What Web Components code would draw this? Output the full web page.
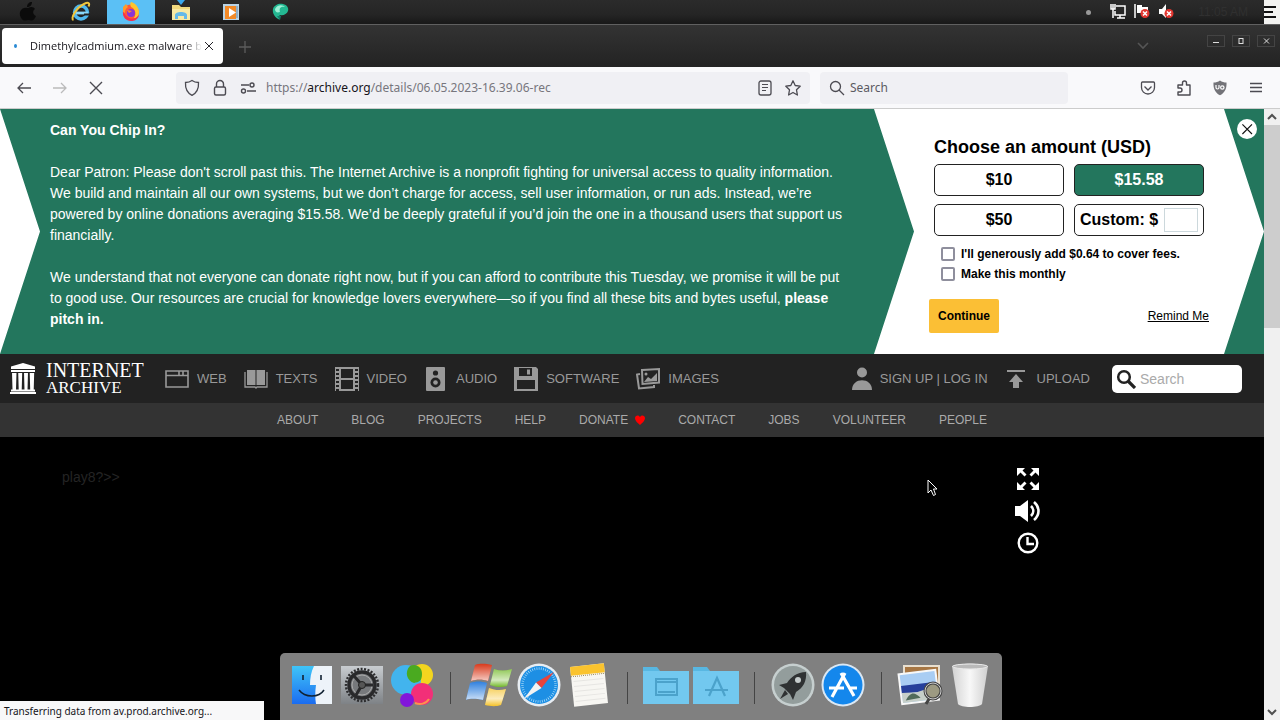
<!DOCTYPE html>
<html lang="en">
<head>
<meta charset="utf-8">
<title>Dimethylcadmium.exe malware</title>
<style>
html,body{height:100%}
body{margin:0;background:#000;font-family:"Liberation Sans",Arial,sans-serif}
</style>
</head>
<body>
<desk-top></desk-top>
<script>
const UI_FONT = '"Noto Sans","Open Sans",sans-serif';

/* every icon: [viewBox width, viewBox height, markup] */
const ICONS = {
  apple:[24,24,'<g fill="#0b0b0b" transform="translate(-3 0)"><path d="M12 8c3-2 6-1 7 1-3 2-2 6 1 7-1 3-3 5-5 4.500-2-.8-3-.8-5 0C6 21.500 3 16 4 12c1-4 5-5 8-4z"/><path d="M11 7c0-3 2-5 5-5 0 3-2 5-5 5z"/></g>'],
  ie:[24,24,'<circle cx="12" cy="12.500" r="6.500" fill="none" stroke="#4fb8ee" stroke-width="3.500"/><path d="M7 13h12" stroke="#8ad8fa" stroke-width="2.800"/><path d="M15 14.500h6" stroke="#222" stroke-width="2"/><path d="M4.500 20C1 19 7 8 15 4c5-2.500 6-.5 4.500 2.500" fill="none" stroke="#f0c53c" stroke-width="2"/>'],
  firefox:[24,24,'<circle cx="12" cy="12.500" r="8" fill="#ff5a36"/><path d="M4 10c2 8 10 12 16 5-1 5-5 6-8 6-5 0-9-4-8-11z" fill="#f5304f"/><path d="M12 2c4 1 8 5 8 10 0 4-3 6-5 6 3-5 1-9-3-11-1-2-1-4 0-5z" fill="#ffc52e"/><path d="M4 7l3-3 2 3c-3 2-3 4-3 6L4 12z" fill="#ff9a2b"/><circle cx="12" cy="13" r="4" fill="#8b35d6"/><path d="M8 10l5 1-3 2z" fill="#ff8a2f"/>'],
  folder:[24,24,'<path d="M3 5h7l2 2h9v13H3z" fill="#f0d97e"/><path d="M3 9h18v11H3z" fill="#f7e9a4"/><path d="M6 15c0-4 12-4 12 0v4h-3v-3H9v3H6z" fill="#64b9e8"/><path d="M8 0h8l-4 5z" fill="#38a8ee"/>'],
  media:[24,24,'<path d="M4 4h16v16H4z" fill="#b8d3e6"/><path d="M6 6h11v13H6z" fill="#f28a28"/><path d="M10 8v9l7-4.500z" fill="#fff"/><path d="M18 6v12" stroke="#6488a5" stroke-width="1"/>'],
  orb:[24,24,'<path d="M4 9c1-4 6-6 10-5s6 4 5 7-5 5-8 4c-2 2-1 4 0 5-5-2-8-7-7-11z" fill="#24b892"/><path d="M6 9c3-5 8-4 10-2-5-1-6 2-5 5-3 1-5 0-5-3z" fill="#9cf0d6"/><path d="M8 16l3 4 1-4z" fill="#137d6b"/>'],
  net:[24,24,'<path d="M10 6h9v9H9v-4" fill="none" stroke="#fff" stroke-width="1.500"/><path d="M5 4v5h4V4M7 4v5M7 9v9M11 18h8M14 15v3" fill="none" stroke="#fff" stroke-width="1.500"/>'],
  flagx:[24,24,'<path d="M5 4v14" stroke="#fff" stroke-width="1.500"/><path d="M7 5h5v2h6v6H7z" fill="#fff"/><circle cx="15" cy="13.500" r="4.500" fill="#e2352f"/><path d="M13 11.500l4 4m0-4l-4 4" stroke="#fff" stroke-width="1.500"/>'],
  mutex:[24,24,'<path d="M5 9h3l4-5v14l-4-4H5z" fill="#fff"/><circle cx="15" cy="13.500" r="4.500" fill="#e2352f"/><path d="M13 11.500l4 4m0-4l-4 4" stroke="#fff" stroke-width="1.500"/>'],
  lines:[16,24,'<path d="M0 0h16v24H0z" fill="#f2f2f0"/><path d="M0 7h12M0 12h9M0 17h12" stroke="#111" stroke-width="2"/>'],
  back:[18,18,'<path d="M16 9H3M8 4L3 9l5 5" fill="none" stroke="currentColor" stroke-width="1.300"/>'],
  fwd:[18,18,'<path d="M2 9h13M10 4l5 5-5 5" fill="none" stroke="currentColor" stroke-width="1.300"/>'],
  x:[18,18,'<path d="M3 3l12 12M15 3L3 15" fill="none" stroke="currentColor" stroke-width="1.400"/>'],
  shield:[18,18,'<path d="M9 1.500c2 1.500 4 2 6.500 2 .3 5-1 10-6.500 12.800C3.500 13.500 2.200 8.500 2.500 3.500 5 3.500 7 3 9 1.500z" fill="none" stroke="currentColor" stroke-width="1.300"/>'],
  lock:[18,18,'<rect x="3.500" y="8" width="11" height="8" rx="1.500" fill="none" stroke="currentColor" stroke-width="1.400"/><path d="M5.500 8V5a3.500 3.500 0 0 1 7 0v3" fill="none" stroke="currentColor" stroke-width="1.400"/>'],
  perms:[18,18,'<g fill="none" stroke="currentColor" stroke-width="1.400"><path d="M2 6h8M8 12h9"/><circle cx="13" cy="6" r="2"/><circle cx="4.500" cy="12" r="2"/></g>'],
  reader:[18,18,'<rect x="3" y="2" width="12" height="14" rx="2" fill="none" stroke="currentColor" stroke-width="1.300"/><path d="M6 5.500h6M6 8.500h6M6 11.500h4" stroke="currentColor" stroke-width="1.200"/>'],
  star:[18,18,'<path d="M9 1.800l2.200 4.700 5 .7-3.700 3.600.9 5.200L9 13.500 4.600 16l.9-5.200L1.800 7.200l5-.7z" fill="none" stroke="currentColor" stroke-width="1.300" stroke-linejoin="round"/>'],
  search:[18,18,'<circle cx="7.500" cy="7.500" r="5" fill="none" stroke="currentColor" stroke-width="1.300"/><path d="M11 11l5 5" stroke="currentColor" stroke-width="1.300"/>'],
  pocket:[18,18,'<path d="M3.500 3h11a1 1 0 0 1 1 1v4.500a6.500 6.500 0 0 1-13 0V4a1 1 0 0 1 1-1z" fill="none" stroke="currentColor" stroke-width="1.300"/><path d="M5.500 7.500L9 11l3.500-3.500" fill="none" stroke="currentColor" stroke-width="1.300"/>'],
  puzzle:[18,18,'<path d="M3 6h4.500V4a2 2 0 0 1 4 0v2H15v10H3v-3h2a2 2 0 0 0 0-4H3z" fill="none" stroke="currentColor" stroke-width="1.400" stroke-linejoin="round"/>'],
  ublock:[18,18,'<path d="M9 1.500c2 1.500 4 2 6.500 2 .3 5-1 10-6.500 12.800C3.500 13.500 2.200 8.500 2.500 3.500 5 3.500 7 3 9 1.500z" fill="#737378"/><path d="M5 6v2.500a1.500 1.500 0 0 0 3 0V6" fill="none" stroke="#fff" stroke-width="1.200"/><circle cx="11.300" cy="8.500" r="1.700" fill="none" stroke="#fff" stroke-width="1.200"/>'],
  menu:[18,18,'<path d="M3 4.500h12M3 8.500h12M3 12.500h12" stroke="currentColor" stroke-width="1.300"/>'],
  plus:[18,18,'<path d="M9 3v12M3 9h12" stroke="currentColor" stroke-width="1.300"/>'],
  chev:[18,18,'<path d="M4 7l5 5 5-5" fill="none" stroke="currentColor" stroke-width="1.600"/>'],
  up:[16,16,'<path d="M4 10l4-4 4 4" fill="none" stroke="currentColor" stroke-width="2"/>'],
  down:[16,16,'<path d="M4 6l4 4 4-4" fill="none" stroke="currentColor" stroke-width="2"/>'],
  min:[18,12,'<rect x=".5" y=".5" width="17" height="11" fill="none" stroke="#444"/><path d="M6 7.500h6" stroke="#ddd"/>'],
  max:[18,12,'<rect x=".5" y=".5" width="17" height="11" fill="none" stroke="#444"/><rect x="7" y="3.500" width="4" height="5" fill="none" stroke="#ddd"/>'],
  close:[18,12,'<rect x=".5" y=".5" width="17" height="11" fill="none" stroke="#444"/><path d="M7 3.500l5 5m0-5l-5 5" stroke="#ddd"/>'],
  temple:[28,32,'<g fill="#fff"><path d="M14 0l12 3.500V6H2V3.500z"/><path d="M2 7h24v2H2zM1 29h26v2H1zM2 26.500h24v2H2z"/><path d="M3 9h4.500L7 27H3.500zM9.200 9h4l-.5 18h-3zM15 9h4l-.5 18h-3zM20.700 9h4.500l-.5 18h-3.500z"/></g><path d="M2 9.500h24" stroke="#222"/>'],
  web:[24,24,'<path d="M1 4h22v16H1zM1 8.500h22M14 4v4M18 4v4" fill="none" stroke="currentColor" stroke-width="1.600"/>'],
  texts:[24,24,'<path d="M3 3h8.500v15H3zM12.500 3H21v15h-8.500z" fill="currentColor"/><path d="M1 5v15h10l1 1 1-1h10V5" fill="none" stroke="currentColor" stroke-width="1.300"/>'],
  video:[24,24,'<path d="M5 1h14v22H5zM5 12h14" fill="none" stroke="currentColor" stroke-width="2"/><path d="M2 0v24M22 0v24" stroke="currentColor" stroke-width="4" stroke-dasharray="2 2"/><path d="M.5 0v24M23.500 0v24" stroke="currentColor"/>'],
  audio:[24,24,'<rect x="2" y="0" width="19" height="24" rx="1" fill="currentColor"/><circle cx="11.500" cy="6" r="2.600" fill="#222"/><circle cx="11.500" cy="15.500" r="5" fill="#222"/><circle cx="11.500" cy="15.500" r="2.300" fill="currentColor"/>'],
  software:[24,24,'<path d="M0 0h22l2 2v22H0z" fill="currentColor"/><path d="M5 1h13v8H5zM3 13h18v9H3z" fill="#222"/><path d="M13 2.500h3v5h-3z" fill="currentColor"/>'],
  images:[24,24,'<path d="M6 3l17-1v13.500L6.500 17z" fill="none" stroke="currentColor" stroke-width="2"/><path d="M4 7l-3 .5 2 14 15-1.500v-2" fill="none" stroke="currentColor" stroke-width="2"/><path d="M8 15l4-5 3 2 6-6v8z" fill="currentColor"/><circle cx="10" cy="7" r="1.500" fill="currentColor"/>'],
  user:[20,24,'<circle cx="10" cy="5.500" r="5" fill="currentColor"/><path d="M0 23c0-13 20-13 20 0z" fill="currentColor"/>'],
  upload:[23,20,'<path d="M1 1h18v2H1z" fill="currentColor"/><path d="M10 5l7 8h-4v6H7v-6H3z" fill="currentColor"/>'],
  bsearch:[20,20,'<circle cx="8" cy="8" r="5.800" fill="none" stroke="#222" stroke-width="2.500"/><path d="M12 12l7 7" stroke="#222" stroke-width="3.200"/>'],
  heart:[10,10,'<path d="M5 10C3 8 0 6 0 3c0-3 4-3.500 5-1 1-2.500 5-2 5 1 0 3-3 5-5 7z" fill="#f00"/>'],
  full:[24,24,'<g fill="#fff"><path id="q" d="M1 1h8L6.500 3.500l4 4-2 2-4-4L1 9z"/><path d="M23 1v8l-3.500-3.500-4 4-2-2 4-4L15 1zM1 23v-8l3.500 3.500 4-4 2 2-4 4L9 23zM23 23h-8l2.500-2.500-4-4 2-2 4 4L23 15z"/></g>'],
  vol:[26,24,'<path d="M0 7h5l8-6v22l-8-6H0z" fill="#fff"/><path d="M16 7c3 3 3 7 0 10M19 3c6 5 6 13 0 18" fill="none" stroke="#fff" stroke-width="2.600"/>'],
  clock:[24,24,'<circle cx="12" cy="12" r="9.300" fill="none" stroke="#fff" stroke-width="2.400"/><path d="M11.500 6v7H18" fill="none" stroke="#fff" stroke-width="2.400"/>'],
  cursor:[12,18,'<path d="M1 1v13l3-3 2.500 5.500 2-1L6.500 10H10z" fill="#000" stroke="#fff"/>'],
  finder:[44,44,'<defs><linearGradient id="a" x2="0" y2="1"><stop stop-color="#3fc5f8"/><stop offset="1" stop-color="#1b6cf0"/></linearGradient></defs><path d="M2 3h40v38H2z" fill="#edf3f9"/><path d="M2 3h22c-3 6-4 12-4 19h6c-1 7-1 13 0 19H2z" fill="url(#a)"/><path d="M13 12v5M31 12v5" stroke="#123" stroke-width="1.600"/><path d="M9 27c6 8 20 8 25 0" fill="none" stroke="#123" stroke-width="1.500"/>'],
  gear:[44,44,'<defs><linearGradient id="b" x2="0" y2="1"><stop stop-color="#c8ccd0"/><stop offset="1" stop-color="#7e8286"/></linearGradient></defs><path d="M1 3h42v38H1z" fill="url(#b)"/><circle cx="22" cy="22" r="16" fill="none" stroke="#2d2d2f" stroke-width="2.500" stroke-dasharray="2 1.500"/><circle cx="22" cy="22" r="13" fill="#77797c" stroke="#29292b" stroke-width="3.500"/><circle cx="22" cy="22" r="10" fill="none" stroke="#aaa"/><path d="M22 22L14 13M22 22h11M22 22l-6 10" stroke="#29292b" stroke-width="3"/><circle cx="22" cy="22" r="3.500" fill="#555" stroke="#222"/>'],
  games:[44,44,'<circle cx="32" cy="12" r="11" fill="#f3d51f"/><circle cx="16" cy="17" r="15" fill="#42b4ee"/><path d="M20 3c6-3 12 1 12 8s-3 8-8 9c-7-2-10-11-4-17z" fill="#4aaa20"/><circle cx="32" cy="31" r="11" fill="#f22f78"/><circle cx="17" cy="37" r="7" fill="#8216da"/><path d="M25 40c5 2 11 1 14-4" fill="none" stroke="#ff914d" stroke-width="2"/>'],
  windows:[48,44,'<defs><linearGradient id="w" x2="0" y2="1"><stop stop-color="#fff" stop-opacity="0"/><stop offset=".7" stop-color="#fff" stop-opacity=".7"/><stop offset="1" stop-color="#fff" stop-opacity="0"/></linearGradient></defs><path id="r" d="M10 2c6-2 11-1 17 0l-4 16c-6-2-11-2-17 0z" fill="#d93a1c"/><path d="M29 6c6 2 12 2 18 0l-5 17c-6 2-12 1-17-1z" fill="#72b928"/><path d="M5 20c6-2 11-2 17 0l-4 17c-6-1-12-2-17 0z" fill="#2f80de"/><path d="M24 25c5 2 11 3 17 1l-5 16c-6 2-11 1-16 0z" fill="#f4c128"/><path d="M10 2c6-2 11-1 17 0l-4 16c-6-2-11-2-17 0zM29 6c6 2 12 2 18 0l-5 17c-6 2-12 1-17-1z" fill="url(#w)"/><path d="M5 20c6-2 11-2 17 0l-4 17c-6-1-12-2-17 0zM24 25c5 2 11 3 17 1l-5 16c-6 2-11 1-16 0z" fill="url(#w)"/>'],
  safari:[44,44,'<circle cx="22" cy="22" r="21.500" fill="#e8edf2"/><circle cx="22" cy="22" r="19" fill="#1d8fe4"/><circle cx="22" cy="22" r="16.500" fill="none" stroke="#b5e1fa" stroke-width="2.500" stroke-dasharray=".7 1.500"/><path d="M37 9L24.500 25 19 19.500z" fill="#e8443c"/><path d="M7 36l12-16.500 5.500 5.500z" fill="#f3f3f3"/>'],
  notes:[44,44,'<g transform="rotate(-6 22 22)"><path d="M5 2h34v40H5z" fill="#f7f6f2"/><path d="M5 2h34v9H5z" fill="#fac32e"/><path d="M5 12h34" stroke="#9b8a58" stroke-dasharray="1 1"/><path d="M7 17h30M7 22h30M7 27h30M7 32h30M7 37h30" stroke="#e6e5e2"/></g>'],
  fold1:[48,44,'<path d="M1 4h14l3 4h29v33H1z" fill="#58b7e2"/><path d="M1 8h46v33H1z" fill="#72c8ef"/><path d="M14 16h21v16H14zM14 19h21M16 29h17" fill="none" stroke="#4ba2cb" stroke-width="2"/>'],
  fold2:[48,44,'<path d="M1 4h14l3 4h29v33H1z" fill="#58b7e2"/><path d="M1 8h46v33H1z" fill="#72c8ef"/><path d="M17 33l8-18 8 18M13 27h23" fill="none" stroke="#4ba2cb" stroke-width="2.200"/>'],
  rocket:[44,44,'<circle cx="22" cy="22" r="21.500" fill="#c6cfcf"/><circle cx="22" cy="22" r="19" fill="#939d9c"/><path d="M35 9c-9 0-15 5-19 11l-8 2 5 3 6 6 3 6 3-8c7-4 11-11 10-20z" fill="#2f3233"/><circle cx="27" cy="17" r="3" fill="#c5cccc"/><path d="M14 27l-5 9 8-5z" fill="#2f3233"/>'],
  store:[44,44,'<circle cx="22" cy="22" r="21.500" fill="#dbe8f4"/><circle cx="22" cy="22" r="19.500" fill="#1487ec"/><path d="M11 34L24 10M20 10l13 23M8 25h15M28 25h8" fill="none" stroke="#fff" stroke-width="3.200"/>'],
  photos:[48,44,'<path d="M7 2h37v28H7z" fill="#e8dfcf"/><path d="M9 4h33v24H9z" fill="#a77744"/><g transform="rotate(-7 22 22)"><path d="M3 8h39v32H3z" fill="#f8f8f8"/><path d="M5 10h35v28H5z" fill="#a9cdf3"/><path d="M5 21h35v8H5z" fill="#263f9b"/><path d="M5 28l15 1 20-4v13H5z" fill="#c6cfc9"/><path d="M8 36c6-9 10-7 15-1z" fill="#506b5b"/></g><circle cx="37" cy="28" r="8" fill="#9d9a82" stroke="#444" stroke-width="3"/><circle cx="37" cy="28" r="8" fill="none" stroke="#ccc"/><path d="M33 36l-3 5" stroke="#444" stroke-width="3"/>'],
  trash:[44,44,'<defs><linearGradient id="c"><stop stop-color="#d2d2d2"/><stop offset=".5" stop-color="#f8f8f8"/><stop offset="1" stop-color="#cfcfcf"/></linearGradient></defs><path d="M4 3c5-3 31-3 36 0l-6 38c-3 4-21 4-24 0z" fill="url(#c)"/><ellipse cx="22" cy="3.500" rx="17.500" ry="2.500" fill="#b9b9b9" stroke="#e8e8e8"/>']
};

/* shared helper: open shadow root filled from a template */
function define(name, css, html){
  const t = document.createElement('template');
  t.innerHTML = '<style>*{box-sizing:border-box}button{font:inherit;border:0;padding:0;margin:0;background:none;color:inherit}a{color:inherit}' + css + '</style>' + html;
  customElements.define(name, class extends HTMLElement{
    constructor(){
      super();
      this.attachShadow({mode:'open'}).append(t.content.cloneNode(true));
    }
  });
}

customElements.define('ui-icon', class extends HTMLElement{
  constructor(){ super(); this.attachShadow({mode:'open'}); }
  connectedCallback(){
    const [w,h,m] = ICONS[this.getAttribute('name')];
    this.shadowRoot.innerHTML = `<style>:host{display:inline-block;flex:none;line-height:0}svg{display:block}</style><svg width="${w}" height="${h}" viewBox="0 0 ${w} ${h}" aria-hidden="true">${m}</svg>`;
  }
});

define('task-bar', `
:host{display:flex;align-items:center;justify-content:space-between;height:24px;background:linear-gradient(#2b2b2b,#252525 60%,#181818)}
.apps{display:flex;gap:2px;padding-left:7px}
.apps button{width:48px;height:24px;display:grid;place-items:center;overflow:hidden}
.apps .on{background:#5bc0f5}
.tray{display:flex;align-items:center}
.dot{width:5px;height:5px;border-radius:50%;background:#999;margin-right:15px}
time{font-size:12px;color:#303030;padding:0 16px 0 20px}`,
`<div class="apps">
<button aria-label="Start"><ui-icon name="apple"></ui-icon></button>
<button aria-label="Internet Explorer"><ui-icon name="ie"></ui-icon></button>
<button class="on" aria-label="Firefox"><ui-icon name="firefox"></ui-icon></button>
<button aria-label="Explorer"><ui-icon name="folder"></ui-icon></button>
<button aria-label="Media Player"><ui-icon name="media"></ui-icon></button>
<button aria-label="Assistant"><ui-icon name="orb"></ui-icon></button></div>
<div class="tray"><span class="dot"></span><ui-icon name="net"></ui-icon><ui-icon name="flagx"></ui-icon><ui-icon name="mutex"></ui-icon><time>11:05 AM</time><ui-icon name="lines"></ui-icon></div>`);

define('tab-strip', `
:host{display:flex;align-items:flex-start;height:43px;padding:3px 5px 0 2px;background:linear-gradient(#333,#232323);border-top:1px solid #606060;font:11px/16px "Open Sans",sans-serif}
.tab{display:flex;align-items:center;width:221px;height:36px;padding:0 7px 0 12px;background:#fff;border-radius:4px;color:#15141a}
.dot{width:4px;height:4px;border-radius:50%;background:#2a8ad4;margin-right:13px}
.t{flex:1;white-space:nowrap;mask-image:linear-gradient(90deg,#000 90%,transparent)}
button{display:grid;place-items:center;width:18px;height:18px}
.tab ui-icon{zoom:.667}
.new{margin:10px 0 0 13px;color:#5c5c5c}
.all{margin:8px 55px 0 auto;color:#555}
.win{display:flex;gap:7px;margin-top:7px}
.win button{height:12px}`,
`<div class="tab" role="tab"><span class="dot"></span><span class="t">Dimethylcadmium.exe malware b</span><button aria-label="Close tab"><ui-icon name="x"></ui-icon></button></div>
<button class="new" aria-label="New tab"><ui-icon name="plus"></ui-icon></button>
<button class="all" aria-label="List all tabs"><ui-icon name="chev"></ui-icon></button>
<div class="win"><button aria-label="Minimize"><ui-icon name="min"></ui-icon></button><button aria-label="Maximize"><ui-icon name="max"></ui-icon></button><button aria-label="Close"><ui-icon name="close"></ui-icon></button></div>`);

define('nav-toolbar', `
:host{display:flex;align-items:center;height:42px;padding:0 6px;background:#f9f9fb;border-bottom:1px solid #ccc;color:#4c4b52;font:12px/18px ${UI_FONT}}
button{display:grid;place-items:center;width:36px;height:32px}
.dim{color:#bbb}
.url{flex:1;display:flex;align-items:center;height:32px;margin:0 10px 0 62px;padding:0 3px 0 2px;background:#f0f0f4;border-radius:4px}
.url button{width:28px}
.addr{flex:1;padding-left:4px;white-space:nowrap;overflow:hidden;color:#77767d;outline:0}
.addr b{font-weight:400;color:#15141a}
.find{display:flex;align-items:center;gap:4px;width:248px;height:32px;margin-right:62px;padding-left:8px;background:#f0f0f4;border-radius:4px}
input{flex:1;min-width:0;border:0;padding:0;background:none;font:inherit;outline:0}
input::placeholder{color:#5b5a62;opacity:1}`,
`<button aria-label="Back"><ui-icon name="back"></ui-icon></button><button class="dim" aria-label="Forward"><ui-icon name="fwd"></ui-icon></button><button aria-label="Stop"><ui-icon name="x"></ui-icon></button>
<div class="url"><button aria-label="Tracking protection"><ui-icon name="shield"></ui-icon></button><button aria-label="Site security"><ui-icon name="lock"></ui-icon></button><button aria-label="Permissions"><ui-icon name="perms"></ui-icon></button>
<div class="addr" role="textbox" aria-label="Address" contenteditable="true" spellcheck="false">https://<b>archive.org</b>/details/06.05.2023-16.39.06-rec</div>
<button aria-label="Reader view"><ui-icon name="reader"></ui-icon></button><button aria-label="Bookmark"><ui-icon name="star"></ui-icon></button></div>
<label class="find"><ui-icon name="search"></ui-icon><input type="text" placeholder="Search" aria-label="Search"></label>
<button aria-label="Pocket"><ui-icon name="pocket"></ui-icon></button><button aria-label="Extensions"><ui-icon name="puzzle"></ui-icon></button><button aria-label="uBlock Origin"><ui-icon name="ublock"></ui-icon></button><button aria-label="Menu"><ui-icon name="menu"></ui-icon></button>`);

define('donate-form', `
:host{display:block;width:310px;padding:26px 15px 0;color:#000}
form{display:flex;flex-direction:column}
h2{margin:0 5px 5px;font-size:18px;line-height:24px}
.amounts{display:grid;grid-template-columns:130px 130px;gap:8px 10px;margin:0 5px;font-weight:bold;font-size:16px;line-height:20px}
.amounts>*{height:32px;border:1px solid #222;border-radius:5px;background:#fff}
.amounts .on{background:#23765d;color:#fff}
.custom{display:flex;align-items:center;justify-content:space-between;padding:0 5px;white-space:nowrap}
.custom input{width:34px;height:24px;margin:0;padding:0 2px;border:1px solid #ccd8dc;background:#fff}
.checks{display:grid;gap:4px;margin:10px 12px 0;font-weight:bold;font-size:12px;line-height:16px}
.checks label{display:flex;align-items:center;gap:6px}
.checks input{appearance:none;width:14px;height:14px;margin:0;border:2px solid #8f8f9d;border-radius:2px;background:#fff}
.foot{display:flex;align-items:center;justify-content:space-between;margin-top:17px;font-size:12px;line-height:16px}
.go{width:70px;height:34px;background:#fbbf35;border-radius:2px;font-weight:bold}`,
`<form onsubmit="return false"><h2>Choose an amount (USD)</h2>
<div class="amounts"><button type="button">$10</button><button type="button" class="on">$15.58</button><button type="button">$50</button><label class="custom">Custom: $<input type="text"></label></div>
<div class="checks"><label><input type="checkbox">I'll generously add $0.64 to cover fees.</label><label><input type="checkbox">Make this monthly</label></div>
<div class="foot"><button type="submit" class="go">Continue</button><a href="#remind">Remind Me</a></div></form>`);

define('donation-banner', `
:host{position:relative;display:flex;min-height:245px;background:#fff}
.msg{flex:1;padding:11px 64px 24px 50px;background:#23765d;color:#fff;font-size:14px;line-height:21px;clip-path:polygon(0 0,calc(100% - 40px) 0,100% 50%,calc(100% - 40px) 100%,0 100%,40px 50%)}
h1,p{margin:0 0 21px;font-size:14px}
p:last-child{margin:0}
.edge{width:40px;background:#23765d;clip-path:polygon(0 0,100% 0,100% 100%,0 100%,100% 50%)}
.x{position:absolute;top:10px;right:7px;display:grid;place-items:center;width:20px;height:20px;border-radius:50%;background:#fff;color:#111}
.x ui-icon{zoom:.8}`,
`<div class="msg"><h1>Can You Chip In?</h1><p>Dear Patron: Please don't scroll past this. The Internet Archive is a nonprofit fighting for universal access to quality information. We build and maintain all our own systems, but we don’t charge for access, sell user information, or run ads. Instead, we’re powered by online donations averaging $15.58. We’d be deeply grateful if you’d join the one in a thousand users that support us financially.</p><p>We understand that not everyone can donate right now, but if you can afford to contribute this Tuesday, we promise it will be put to good use. Our resources are crucial for knowledge lovers everywhere—so if you find all these bits and bytes useful, <b>please pitch in.</b></p></div>
<donate-form></donate-form><div class="edge"></div><button class="x" aria-label="Close"><ui-icon name="x"></ui-icon></button>`);

define('nav-item', `
:host{display:block;color:#999}
a{display:flex;align-items:center;gap:8px;text-decoration:none;font-size:13px;line-height:16px;white-space:nowrap}`,
`<a href="#"><slot name="icon"></slot><slot></slot></a>`);

define('archive-nav', `
:host{display:flex;align-items:center;height:49px;padding:0 22px 0 9px;background:#222}
.logo{display:flex;align-items:center;gap:9px;width:156px;color:#fff;text-decoration:none;font-family:"Liberation Serif",serif;font-size:20px;line-height:18px}
.logo span{display:block}
.logo .low{font-size:17px}
nav{display:flex;gap:17px;flex:1}
.me{display:flex;align-items:center;gap:18px}
.find{display:flex;align-items:center;gap:4px;width:130px;height:28px;margin-left:22px;padding-left:4px;border-radius:5px;background:#fff}
input{flex:1;min-width:0;border:0;padding:0;background:none;font:14px/18px "Liberation Sans",sans-serif;outline:0}
input::placeholder{color:#aaa;opacity:1}`,
`<a class="logo" href="#"><ui-icon name="temple"></ui-icon><span><span>INTERNET</span><span class="low">ARCHIVE</span></span></a>
<nav>${[['web','WEB'],['texts','TEXTS'],['video','VIDEO'],['audio','AUDIO'],['software','SOFTWARE'],['images','IMAGES']].map(([i,t])=>`<nav-item><ui-icon slot="icon" name="${i}"></ui-icon>${t}</nav-item>`).join('')}</nav>
<div class="me"><nav-item><ui-icon slot="icon" name="user"></ui-icon>SIGN UP | LOG IN</nav-item><nav-item><ui-icon slot="icon" name="upload"></ui-icon>UPLOAD</nav-item></div>
<label class="find"><ui-icon name="bsearch"></ui-icon><input type="text" placeholder="Search" aria-label="Search the archive"></label>`);

define('archive-subnav', `
:host{display:flex;justify-content:center;gap:33px;height:34px;align-items:center;background:#333;color:#aaa;font-size:12px;line-height:16px}
a{display:flex;align-items:center;gap:7px;text-decoration:none}`,
['ABOUT','BLOG','PROJECTS','HELP','DONATE','CONTACT','JOBS','VOLUNTEER','PEOPLE'].map(t=>`<a href="#">${t}${t==='DONATE'?'<ui-icon name="heart"></ui-icon>':''}</a>`).join(''));

define('media-stage', `
:host{display:flex;justify-content:space-between;align-items:flex-start;flex:1;padding:30px 223px 0 62px;background:#000}
p{margin:0;font-size:14px;line-height:20px;color:#242424}
.c{display:grid;justify-items:center;gap:8px}
button{display:block;height:24px}`,
`<p>play8?>></p><div class="c"><button aria-label="Full screen"><ui-icon name="full"></ui-icon></button><button aria-label="Volume"><ui-icon name="vol"></ui-icon></button><button aria-label="History"><ui-icon name="clock"></ui-icon></button></div>`);

define('scroll-bar', `
:host{display:flex;flex-direction:column;width:16px;background:#f0f0f0;color:#505050}
button{height:16px}
.track{flex:1}
.thumb{height:35%;background:#cdcdcd}`,
`<button aria-label="Scroll up"><ui-icon name="up"></ui-icon></button><div class="track"><div class="thumb"></div></div><button aria-label="Scroll down"><ui-icon name="down"></ui-icon></button>`);

const slot = n => `<button aria-label="${n}"><ui-icon name="${n}"></ui-icon></button>`;
define('app-dock', `
:host{display:flex;align-items:center;height:67px;padding:0 7px 4px;background:#808080;border-radius:5px 5px 0 0}
button{display:grid;place-items:center;width:50px;height:44px}
hr{width:1px;height:32px;margin:6px 13px 0;border:0;background:#444}`,
[['finder','gear','games'],['windows','safari','notes'],['fold1','fold2'],['rocket','store'],['photos','trash']].map(g=>g.map(slot).join('')).join('<hr>'));

define('desk-top', `
:host{position:relative;display:flex;flex-direction:column;min-height:100%}
main{flex:1;display:flex}
.page{flex:1;min-width:0;display:flex;flex-direction:column}
app-dock{position:absolute;bottom:0;left:50%;margin-left:-360px}
.status{position:absolute;left:0;bottom:0;width:264px;height:19px;padding-left:4px;background:#f8f8f9;color:#15141a;font:10px/20px ${UI_FONT}}
.cur{position:absolute;left:927px;top:479px}`,
`<task-bar></task-bar><tab-strip></tab-strip><nav-toolbar></nav-toolbar>
<main><div class="page"><donation-banner></donation-banner><archive-nav></archive-nav><archive-subnav></archive-subnav><media-stage></media-stage></div><scroll-bar></scroll-bar></main>
<div class="status" role="status">Transferring data from av.prod.archive.org...</div><app-dock></app-dock><ui-icon class="cur" name="cursor"></ui-icon>`);
</script>
</body>
</html>
